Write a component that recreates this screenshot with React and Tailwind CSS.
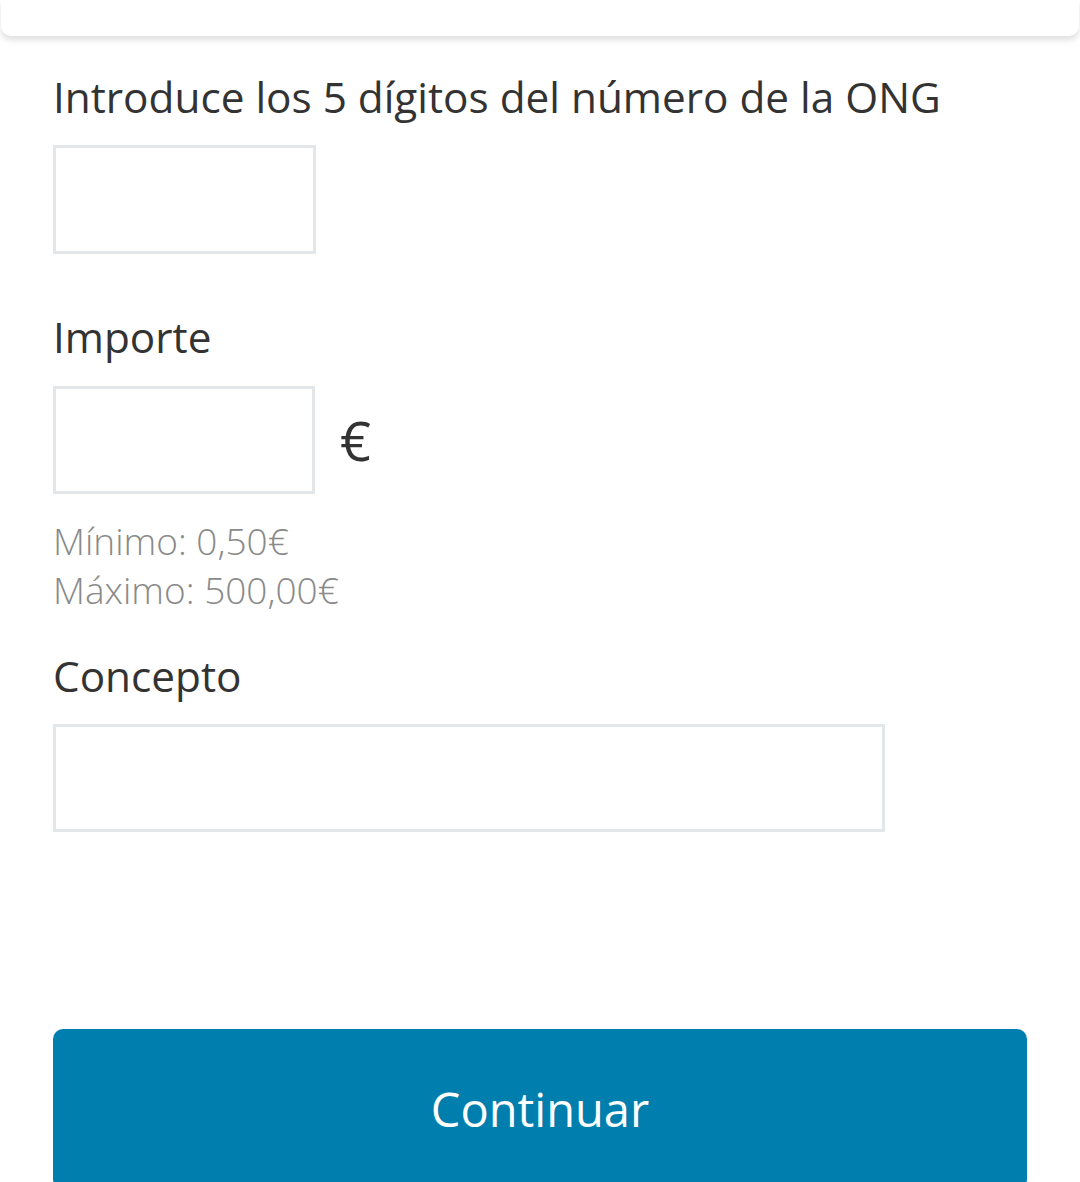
export default function App() {
  const font = { fontFamily: '"Open Sans", "Noto Sans", sans-serif' };
  return (
    <div className="w-[1080px] h-[1182px] bg-white overflow-hidden" style={font}>
      <div className="h-[36px] mx-[1px] bg-white rounded-b-[10px] shadow-[0_4px_6px_rgba(0,0,0,0.13)]" />
      <div className="px-[53px]">
        <div className="mt-[33px] mb-[20px] text-[42.3px] leading-[56px] text-[#333333]">
          Introduce los 5 dígitos del número de la ONG
        </div>
        <div className="w-[263px] h-[109px] border-[3px] border-[#e4e7e9] bg-white" />
        <div className="mt-[55px] mb-[21px] text-[42.3px] leading-[56px] text-[#333333]">Importe</div>
        <div className="flex items-center gap-[25px]">
          <div className="w-[262px] h-[108px] border-[3px] border-[#e4e7e9] bg-white" />
          <span className="text-[54px] leading-none text-[#333333]">€</span>
        </div>
        <div className="mt-[22px] text-[37px] leading-[49px] text-[#8a8a8a] font-light">
          <div>Mínimo: 0,50€</div>
          <div>Máximo: 500,00€</div>
        </div>
        <div className="mt-[34px] mb-[20px] text-[42.3px] leading-[56px] text-[#333333]">Concepto</div>
        <div className="w-[832px] h-[108px] border-[3px] border-[#e4e7e9] bg-white" />
        <button className="mt-[197px] w-[974px] h-[160px] rounded-[10px] bg-[#007eae] text-white text-[47px] leading-none flex items-center justify-center" style={font}>
          Continuar
        </button>
      </div>
    </div>
  );
}
